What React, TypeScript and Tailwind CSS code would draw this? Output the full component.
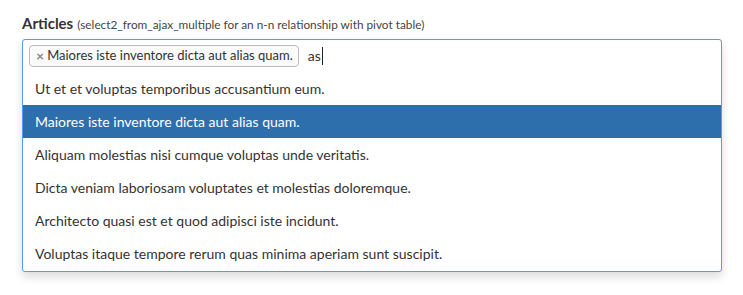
const options = [
  'Ut et et voluptas temporibus accusantium eum.',
  'Maiores iste inventore dicta aut alias quam.',
  'Aliquam molestias nisi cumque voluptas unde veritatis.',
  'Dicta veniam laboriosam voluptates et molestias doloremque.',
  'Architecto quasi est et quod adipisci iste incidunt.',
  'Voluptas itaque tempore rerum quas minima aperiam sunt suscipit.',
]

export default function App() {
  return (
    <div className="h-[295px] w-[743px] bg-white font-['Lato',sans-serif] text-[#333]">
      <div className="px-[22px] pt-[13px]">
        <label className="block h-[26px] leading-[20px]">
          <span className="text-[15px] font-bold text-[#333]">Articles</span>{' '}
          <span className="text-[11.8px] text-[#444]">
            (select2_from_ajax_multiple for an n-n relationship with pivot table)
          </span>
        </label>
        <div className="w-[700px] rounded-[3px] border border-[#5897fb] bg-white shadow-[0_5px_10px_rgba(0,0,0,0.14)]">
          <div className="flex h-[31px] items-center gap-[9px] px-[6px]">
            <span className="flex h-[22px] items-center gap-[3px] rounded-[4px] border border-[#bbb] bg-[#fafafa] pl-[6px] pr-[5px] text-[13px] leading-none text-[#333]">
              <span className="text-[14px] font-bold text-[#888]">×</span>
              Maiores iste inventore dicta aut alias quam.
            </span>
            <span className="flex items-center text-[14px] text-[#333]">
              as<span className="ml-px inline-block h-[18px] w-px bg-[#222]" />
            </span>
          </div>
          <ul className="pt-px pb-px">
            {options.map((o, i) => (
              <li
                key={o}
                className={
                  i === 1
                    ? 'flex h-[33px] items-center bg-[#2d6ead] px-[12px] text-[14px] text-white'
                    : 'flex h-[33px] items-center px-[12px] text-[14px] text-[#333]'
                }
              >
                {o}
              </li>
            ))}
          </ul>
        </div>
      </div>
    </div>
  )
}
